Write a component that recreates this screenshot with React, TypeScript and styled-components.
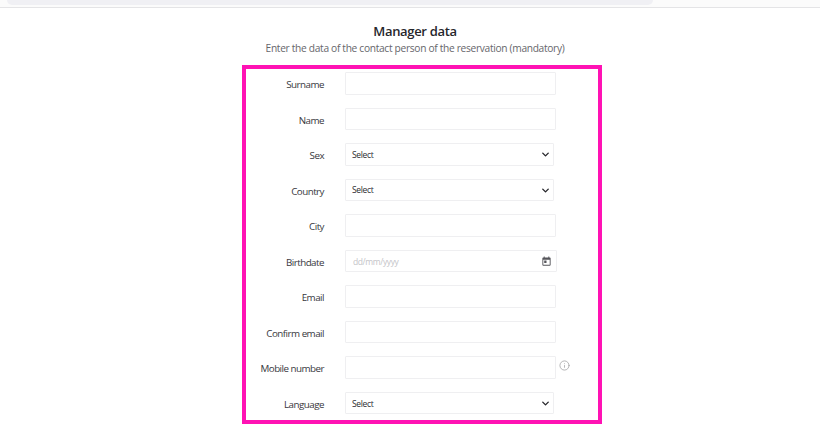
import styled, {createGlobalStyle} from "styled-components";
import {ChevronDown, Info} from "lucide-react";

const GlobalStyle = createGlobalStyle`
    html, body {
        margin: 0;
        background: #fff;
        font-family: "Open Sans", "Noto Sans", sans-serif;
    }
`;

const Page = styled.div`
    width: 820px;
    height: 443px;
    overflow: hidden;
`;

const TopBar = styled.div`
    height: 7px;
    padding-left: 7px;
    background: #fbfbfb;
    border-bottom: 1px solid #e4e4e6;
`;

const AddressField = styled.div`
    width: 646px;
    height: 5px;
    background: #f0f0f4;
    border-radius: 0 0 6px 6px;
`;

const Heading = styled.div`
    width: 830px;
    padding-top: 14px;
    text-align: center;
`;

const Title = styled.h1`
    margin: 0;
    font-size: 13px;
    letter-spacing: -0.33px;
    line-height: 18px;
    font-weight: 600;
    color: #26262b;
`;

const Subtitle = styled.p`
    margin: 0;
    font-size: 10.2px;
    letter-spacing: -0.31px;
    line-height: 17px;
    color: #66666b;
`;

const Frame = styled.form`
    box-sizing: border-box;
    width: 360px;
    height: 359px;
    margin: 8px 0 0 242px;
    padding: 3px 0 0;
    border: 4px solid #ff12b4;
    display: grid;
    grid-template-columns: 78px 1fr;
    grid-auto-rows: 22.55px;
    column-gap: 21px;
    row-gap: 13px;
    align-items: stretch;
`;

const Label = styled.label`
    font-size: 9.8px;
    letter-spacing: -0.52px;
    line-height: 26px;
    text-align: right;
    color: #37373d;
    white-space: nowrap;
`;

const FieldRow = styled.div`
    position: relative;
    display: flex;
    align-items: stretch;
`;

const TextInput = styled.input<{$wide?: boolean}>`
    box-sizing: border-box;
    width: ${p => (p.$wide ? "212px" : "211px")};
    padding: 0 7px;
    border: 1px solid #efeff1;
    border-radius: 1px;
    background: #fff;
    font-family: inherit;
    font-size: 8.5px;
    letter-spacing: -0.4px;
    outline: none;
    &::placeholder {
        color: #c4c4c8;
    }
`;

const SelectBox = styled.select`
    box-sizing: border-box;
    width: 209px;
    padding: 0 6px;
    appearance: none;
    border: 1px solid #efeff1;
    border-radius: 1px;
    background: #fff;
    font-family: inherit;
    font-size: 8.5px;
    letter-spacing: -0.35px;
    font-weight: 500;
    color: #2b2b30;
    outline: none;
`;

const Chevron = styled(ChevronDown)`
    position: absolute;
    left: 195px;
    top: 6px;
    color: #26262b;
    pointer-events: none;
`;

const CalendarIcon = styled.svg`
    position: absolute;
    left: 196px;
    top: 6px;
    width: 11px;
    height: 11px;
    color: #55555a;
`;

const HelpIcon = styled(Info)`
    position: absolute;
    left: 214px;
    top: 4px;
    color: #a6a6a8;
`;

const Select = ({id}: {id: string}) => (
    <FieldRow>
        <SelectBox id={id} defaultValue="">
            <option value="">Select</option>
        </SelectBox>
        <Chevron size={11} strokeWidth={3} />
    </FieldRow>
);

const Text = ({id}: {id: string}) => (
    <FieldRow>
        <TextInput id={id} type="text" />
    </FieldRow>
);

const App = () => {
    return (
        <Page>
            <GlobalStyle />
            <TopBar>
                <AddressField />
            </TopBar>
            <Heading>
                <Title>Manager data</Title>
                <Subtitle>Enter the data of the contact person of the reservation (mandatory)</Subtitle>
            </Heading>
            <Frame>
                <Label htmlFor="surname">Surname</Label>
                <Text id="surname" />
                <Label htmlFor="name">Name</Label>
                <Text id="name" />
                <Label htmlFor="sex">Sex</Label>
                <Select id="sex" />
                <Label htmlFor="country">Country</Label>
                <Select id="country" />
                <Label htmlFor="city">City</Label>
                <Text id="city" />
                <Label htmlFor="birthdate">Birthdate</Label>
                <FieldRow>
                    <TextInput id="birthdate" $wide type="text" placeholder="dd/mm/yyyy" />
                    <CalendarIcon viewBox="0 0 24 24" fill="currentColor">
                        <path d="M19 3h-1V1h-2v2H8V1H6v2H5a2 2 0 0 0-2 2v14a2 2 0 0 0 2 2h14a2 2 0 0 0 2-2V5a2 2 0 0 0-2-2zm0 16H5V8h14v11zM7 10h5v5H7z" />
                    </CalendarIcon>
                </FieldRow>
                <Label htmlFor="email">Email</Label>
                <Text id="email" />
                <Label htmlFor="confirm">Confirm email</Label>
                <Text id="confirm" />
                <Label htmlFor="mobile">Mobile number</Label>
                <FieldRow>
                    <TextInput id="mobile" type="text" />
                    <HelpIcon size={11} strokeWidth={1.8} />
                </FieldRow>
                <Label htmlFor="language">Language</Label>
                <Select id="language" />
            </Frame>
        </Page>
    );
};

export default App;
